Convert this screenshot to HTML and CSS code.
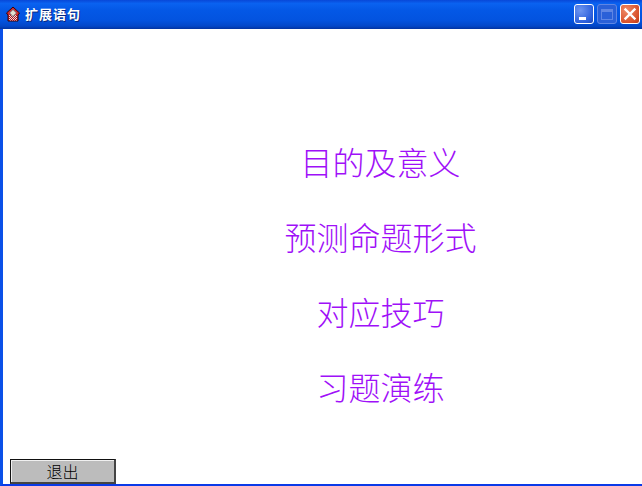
FILE: index.html
```html
<!DOCTYPE html>
<html lang="zh-CN">
<head>
    <meta charset="UTF-8">
    <title>扩展语句</title>
    <link rel="stylesheet" href="styles.css">
</head>
<body>
    <div class="window">
        <div class="titlebar">
            <svg class="app-icon" width="16" height="16" viewBox="0 0 16 16">
                <defs>
                    <pattern id="check" width="2" height="2" patternUnits="userSpaceOnUse">
                        <rect width="2" height="2" fill="#f6d8d8"/>
                        <rect width="1" height="1" fill="#a81820"/>
                        <rect x="1" y="1" width="1" height="1" fill="#a81820"/>
                    </pattern>
                </defs>
                <path d="M8 1 L14.500 7 L13 9 L13 15 L3 15 L3 9 L1.500 7 Z" fill="#d8232a" stroke="#30060a" stroke-width="1"/>
                <rect x="4" y="9" width="8" height="5.500" fill="url(#check)"/>
                <path d="M8 3.500 L11.500 7 L8 10.500 L4.500 7 Z" fill="#e4e0d0" stroke="#50606a" stroke-width="0.800"/>
            </svg>
            <span class="title">扩展语句</span>
            <div class="controls">
                <div class="ctl ctl-min"><span class="min-bar"></span></div>
                <div class="ctl ctl-max"><span class="max-box"></span></div>
                <div class="ctl ctl-close">
                    <svg width="14" height="14" viewBox="0 0 14 14">
                        <path d="M2.500 2.500 L11.500 11.500 M11.500 2.500 L2.500 11.500" stroke="#fff" stroke-width="2.400" stroke-linecap="square"/>
                    </svg>
                </div>
            </div>
        </div>
        <div class="client">
            <div class="menu">
                <div class="menu-item">目的及意义</div>
                <div class="menu-item">预测命题形式</div>
                <div class="menu-item">对应技巧</div>
                <div class="menu-item">习题演练</div>
            </div>
            <div class="footer">
                <div class="exit-btn">退出</div>
            </div>
        </div>
    </div>
</body>
</html>
```

FILE: styles.css
```css
* {
    padding: 0;
    margin: 0;
    box-sizing: border-box;
}
html, body {
    width: 100%;
    height: 100%;
    overflow: hidden;
    background-color: #fff;
    font-family: "Noto Sans CJK SC", "Liberation Sans", sans-serif;
}
.window {
    width: 642px;
    height: 486px;
    display: flex;
    flex-direction: column;
}
.titlebar {
    height: 29px;
    flex: none;
    display: flex;
    align-items: center;
    padding: 1px 2px 2px 5px;
    background: linear-gradient(to bottom, #0848d8 0%, #0a62f0 12%, #0458e6 35%, #0353df 70%, #0347c8 90%, #0233a0 100%);
}
.app-icon {
    flex: none;
    margin-right: 4px;
}
.title {
    color: #fff;
    font-size: 13px;
    font-weight: 700;
    letter-spacing: 1px;
    margin-bottom: 2px;
    text-shadow: 1px 1px 0 #0a2a80;
}
.controls {
    margin-left: auto;
    display: flex;
    gap: 3px;
}
.ctl {
    width: 20px;
    height: 20px;
    border: 1px solid #fff;
    border-radius: 3px;
    position: relative;
    display: flex;
    align-items: center;
    justify-content: center;
}
.ctl-min {
    background: radial-gradient(circle at 30% 30%, #6d95f0, #2c5fdc 70%, #2248b8);
}
.ctl-max {
    background: #2a60d8;
    border-color: #5f86e4;
}
.ctl-close {
    background: radial-gradient(circle at 30% 30%, #ee8a68, #d8502a 70%, #b83a18);
}
.min-bar {
    position: absolute;
    left: 4px;
    bottom: 3px;
    width: 7px;
    height: 3px;
    background-color: #fff;
}
.max-box {
    width: 12px;
    height: 11px;
    border: 1px solid #5f86e4;
    border-top-width: 3px;
}
.client {
    flex: 1;
    display: flex;
    flex-direction: column;
    background-color: #fff;
    border-left: 3px solid #0a50e8;
    border-bottom: 2px solid #0a3ae8;
}
.menu {
    flex: 1;
    display: flex;
    flex-direction: column;
    align-items: center;
    gap: 27px;
    padding: 108px 0 0 116px;
}
.menu-item {
    font-size: 32px;
    line-height: 48px;
    font-weight: 200;
    color: #a010f8;
    white-space: nowrap;
}
.footer {
    flex: none;
    padding: 0 0 0 7px;
}
.exit-btn {
    width: 106px;
    height: 25px;
    background-color: #bcbcbc;
    border: 1px solid #111;
    border-right: 2px solid #444;
    border-bottom: 2px solid #444;
    box-shadow: inset 1px 1px 0 #f0f0f0;
    font-size: 16px;
    font-weight: 300;
    line-height: 22px;
    text-align: center;
    color: #000;
}
```
